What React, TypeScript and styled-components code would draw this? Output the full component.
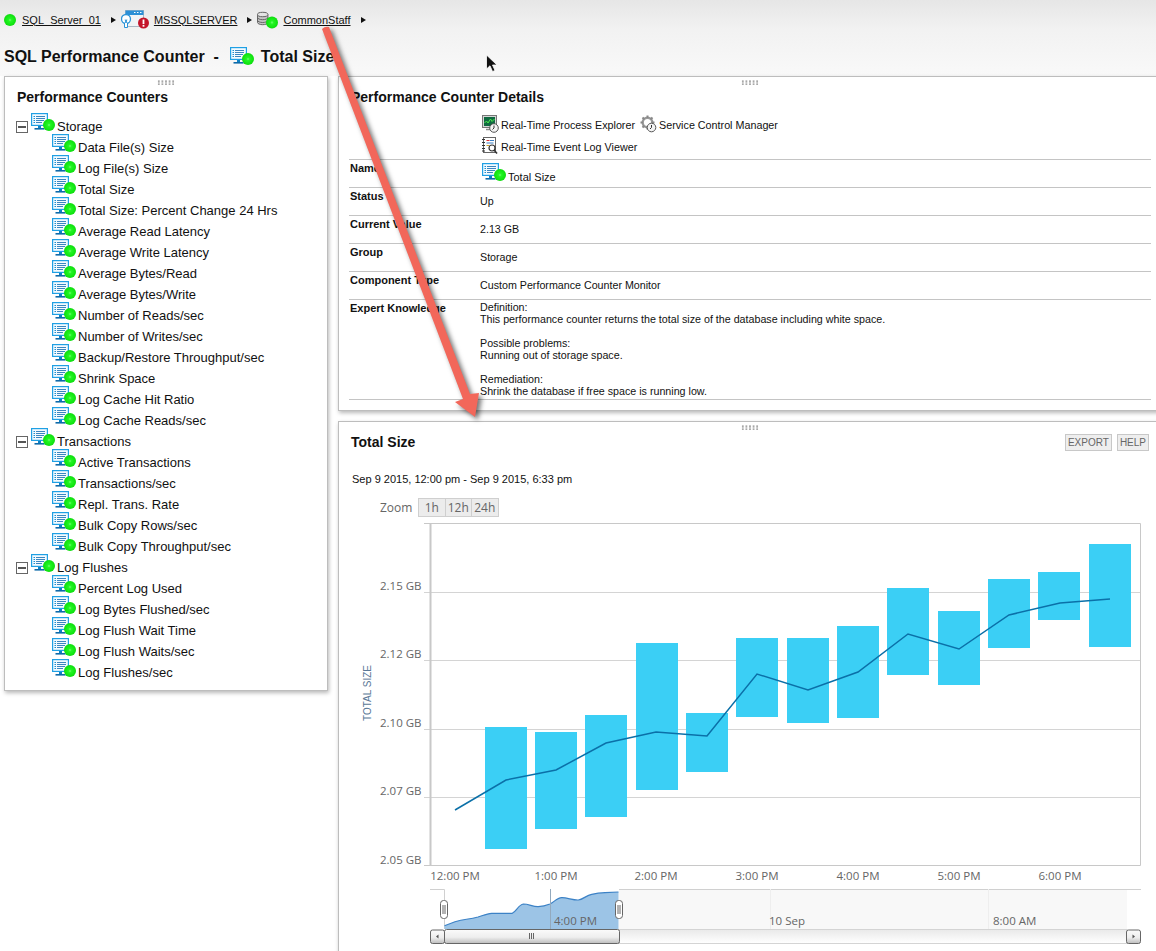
import React from "react";
import styled, { createGlobalStyle } from "styled-components";

const Global = createGlobalStyle`
  html, body { margin: 0; padding: 0; background: #fff; overflow: hidden; }
  body { font-family: "Liberation Sans", Arial, sans-serif; color: #111; }
`;

const Page = styled.div`
  position: relative;
  width: 1156px;
  height: 951px;
  overflow: hidden;
  background: #fff;
`;

const Header = styled.header`
  height: 76px;
  box-sizing: border-box;
  padding: 12px 0 0 4px;
  background: linear-gradient(#e6e6e6, #f2f2f2 40%, #f9f9f9);
`;

const Breadcrumb = styled.nav`
  display: flex;
  align-items: center;
  height: 15px;
  font-size: 11px;
`;

const CrumbLink = styled.a`
  color: #111;
  text-decoration: underline;
  margin-left: ${(p: { $gap: number }) => p.$gap}px;
`;

const CrumbArrow = styled.span`
  width: 0;
  height: 0;
  border-left: 5px solid #111;
  border-top: 3.5px solid transparent;
  border-bottom: 3.5px solid transparent;
  margin-left: 10px;
  margin-right: ${(p: { $gap: number }) => p.$gap}px;
`;

const PageTitle = styled.h1`
  display: flex;
  align-items: center;
  margin: 20px 0 0;
  height: 20px;
  font-size: 16px;
  font-weight: bold;
  white-space: pre;
`;

const TitleIcon = styled.span`
  display: inline-flex;
  margin: -3px 7px 0 11px;
`;

const Main = styled.main`
  display: grid;
  grid-template-columns: 324px 824px;
  column-gap: 10px;
  padding-left: 4px;
  align-items: start;
`;

const Panel = styled.section`
  position: relative;
  box-sizing: border-box;
  background: #fff;
  border: 1px solid #bdbdbd;
  box-shadow: 1px 2px 4px rgba(0, 0, 0, 0.28);
`;

const Grip = styled.div`
  position: absolute;
  top: 3px;
  left: 50%;
  margin-left: -9px;
  width: 18px;
  height: 5px;
  background: radial-gradient(circle, #a8a8a8 1px, transparent 1.3px) 0 0 / 3.6px 3px;
`;

const PanelTitle = styled.h2`
  margin: 0;
  font-size: 14px;
  line-height: 16px;
  font-weight: bold;
`;

const LeftPanel = styled(Panel)`
  padding: 12px 12px 7px;
`;

const Tree = styled.div`
  margin-top: 11px;
  margin-left: -1px;
`;

const TreeRow = styled.div`
  display: flex;
  align-items: center;
  height: 21px;
  font-size: 13px;
  white-space: nowrap;
  padding-left: ${(p: { $child?: boolean }) => (p.$child ? "36px" : "0")};
`;

const Expander = styled.span`
  box-sizing: border-box;
  width: 12px;
  height: 12px;
  margin-right: 3px;
  border: 1px solid #666;
  background: #fff;
  display: flex;
  align-items: center;
  justify-content: center;
  &::after {
    content: "";
    width: 8px;
    height: 2px;
    background: #555;
  }
`;

const RowIcon = styled.span`
  display: inline-flex;
  margin: -10px 2px 0 0;
`;

const RightColumn = styled.div`
  display: flex;
  flex-direction: column;
  gap: 10px;
`;

const DetailsPanel = styled(Panel)`
  height: 335px;
  padding: 12px 4px 0 12px;
`;

const ActionsRow = styled.div`
  margin: 5px 0 0 -2px;
  padding: 4px 0 0 133px;
  height: 50px;
  box-sizing: border-box;
  border-bottom: 1px solid #c4c4c4;
  width: 802px;
`;

const ActionLine = styled.div`
  display: flex;
  align-items: center;
  height: 22px;
  font-size: 10.75px;
  white-space: nowrap;
`;

const ActionIcon = styled.span`
  display: inline-flex;
  margin: -2px 2px 0 ${(p: { $gap?: number }) => p.$gap ?? 0}px;
`;

const DetailRow = styled.div`
  display: grid;
  grid-template-columns: 131px 1fr;
  box-sizing: border-box;
  width: 802px;
  margin-left: -2px;
  height: ${(p: { $h: number }) => p.$h}px;
  border-bottom: 1px solid #c4c4c4;
  font-size: 11px;
`;

const DetailLabel = styled.div`
  font-weight: bold;
  padding: 2px 0 0 1px;
  line-height: 12px;
`;

const DetailValue = styled.div`
  padding-top: ${(p: { $top?: number }) => p.$top ?? 7}px;
  line-height: 12px;
  font-size: 10.7px;
  white-space: pre-line;
`;

const NameValue = styled.div`
  display: flex;
  align-items: flex-start;
  padding: 3px 0 0 2px;
  line-height: 12px;
`;

const NameText = styled.span`
  margin: 8px 0 0 2px;
`;

const ChartPanel = styled(Panel)`
  height: 560px;
  padding: 12px 0 0 12px;
  border-bottom: none;
`;

const ChartHeader = styled.div`
  display: flex;
  align-items: flex-start;
  height: 17px;
  width: 798px;
`;

const HeaderSpacer = styled.div`
  flex: 1;
`;

const SmallButton = styled.button`
  box-sizing: border-box;
  height: 17px;
  padding: 0 2px;
  margin-left: 5px;
  font: 10px "Liberation Sans", Arial, sans-serif;
  color: #666;
  background: #eee;
  border: 1px solid #c8c8c8;
`;

const DateRange = styled.div`
  margin-top: 21px;
  padding-left: 1px;
  font-size: 11px;
  line-height: 14px;
`;

const ZoomRow = styled.div`
  display: flex;
  align-items: center;
  height: 19px;
  margin: 12px 0 0 29px;
  color: #666;
  font: 12px "Open Sans", sans-serif;
`;

const ZoomLabel = styled.span`
  width: 38px;
`;

const ZoomButton = styled.button`
  box-sizing: border-box;
  width: 27.5px;
  height: 19px;
  padding: 0;
  margin-right: -1px;
  font: 12px "Open Sans", sans-serif;
  color: #666;
  background: #ececec;
  border: 1px solid #cfcfcf;
`;

const ChartSvg = styled.svg`
  display: block;
  margin: 5px 0 0 -12px;
  text {
    font-family: "Open Sans", sans-serif;
    font-size: 11.5px;
    fill: #666;
  }
`;

const ArrowOverlay = styled.svg`
  position: absolute;
  left: 0;
  top: 0;
  pointer-events: none;
  filter: drop-shadow(3px 3px 2.5px rgba(0, 0, 0, 0.55));
`;

const CursorOverlay = styled.svg`
  position: absolute;
  left: 484px;
  top: 53px;
  pointer-events: none;
`;

const Sprite = styled.svg`
  position: absolute;
  width: 0;
  height: 0;
`;

const Defs = () => (
  <Sprite aria-hidden="true">
    <defs>
      <radialGradient id="greenDot" cx="50%" cy="50%" r="55%">
        <stop offset="0" stopColor="#70ff70" />
        <stop offset="0.25" stopColor="#22f522" />
        <stop offset="0.85" stopColor="#0ee00e" />
        <stop offset="1" stopColor="#0ab80a" />
      </radialGradient>
      <linearGradient id="thumb" x1="0" y1="0" x2="0" y2="1">
        <stop offset="0" stopColor="#fbfbfb" />
        <stop offset="0.55" stopColor="#eeeeee" />
        <stop offset="1" stopColor="#bdbdbd" />
      </linearGradient>
      <linearGradient id="track" x1="0" y1="0" x2="0" y2="1">
        <stop offset="0" stopColor="#e9e9e9" />
        <stop offset="1" stopColor="#ffffff" />
      </linearGradient>
    </defs>
  </Sprite>
);

const Monitor = () => (
  <svg width="24" height="18" viewBox="0 0 24 18">
    <rect x="0.6" y="0.6" width="15.8" height="11.8" fill="#f4fbff" stroke="#1fa0e4" strokeWidth="1.2" />
    <path d="M2.5 3.5h1.500M2.500 5.500h1.500M2.500 7.500h1.500M2.500 9.500h1.500" stroke="#1c8fd0" />
    <path d="M5 3.500h9M5 5.500h9M5 7.500h8M5 9.500h6" stroke="#3c86c0" />
    <rect x="7" y="13" width="3" height="2" fill="#0e82c4" />
    <rect x="3.500" y="15" width="10" height="1.600" fill="#0e6aaa" />
    <circle cx="18" cy="12" r="6" fill="url(#greenDot)" />
  </svg>
);

const Dot = () => (
  <svg width="12" height="12" viewBox="0 0 12 12">
    <circle cx="6" cy="6" r="6" fill="url(#greenDot)" />
  </svg>
);

const AppIcon = () => (
  <svg width="28" height="20" viewBox="0 0 28 20">
    <rect x="4.500" y="0.500" width="18" height="16" fill="#f0f3f6" stroke="#a9b7c4" />
    <rect x="4.500" y="0.500" width="18" height="4.500" fill="#2b8fd6" />
    <path d="M13 2.500h1.500M16 2.500h1.500M19 2.500h1.500" stroke="#fff" />
    <circle cx="5" cy="9" r="4.500" fill="#fff" stroke="#2a93d8" strokeWidth="1.300" />
    <path d="M3.500 13v4.500h3v-4.500M4.200 9.500l.8 3.500 .8-3.500" fill="#fff" stroke="#2a93d8" />
    <circle cx="22.500" cy="13" r="5.500" fill="#c4142a" />
    <rect x="21.600" y="9.500" width="1.800" height="4.600" fill="#fff" />
    <rect x="21.600" y="15" width="1.800" height="1.700" fill="#fff" />
  </svg>
);

const DbIcon = () => (
  <svg width="22" height="18" viewBox="0 0 22 18">
    <path d="M.5 3.500v8c0 1.200 2.500 2.200 5.200 2.200s5.200-1 5.200-2.200v-8" fill="#c4c4c4" stroke="#666" />
    <ellipse cx="5.700" cy="3.500" rx="5.200" ry="2.200" fill="#e4e4e4" stroke="#666" />
    <path d="M.5 6.500c0 1.200 2.500 2.200 5.200 2.200s5.200-1 5.200-2.200M.5 9.300c0 1.200 2.500 2.200 5.200 2.200s5.200-1 5.200-2.200" fill="none" stroke="#666" />
    <circle cx="15" cy="11.500" r="6" fill="url(#greenDot)" />
  </svg>
);

const ClockBadge = ({ x, y }: { x: number; y: number }) => (
  <g>
    <circle cx={x} cy={y} r="4.300" fill="#f4f4f4" stroke="#555" />
    <path d={`M${x} ${y - 2.500}V${y}l-1.500 1.500`} fill="none" stroke="#333" />
  </g>
);

const ProcessIcon = () => (
  <svg width="17" height="18" viewBox="0 0 17 18">
    <rect x="0.500" y="0.500" width="14" height="12" fill="#d6d6d6" stroke="#777" />
    <rect x="2" y="2" width="11" height="9" fill="#0f6a40" />
    <path d="M2.500 8l2-2 1.500 2 2.500-4 1.500 2.500 2.500-2.500" fill="none" stroke="#4de84d" />
    <path d="M4 14.500h7" stroke="#8a8a8a" strokeWidth="1.500" />
    <ClockBadge x={12} y={13} />
  </svg>
);

const GearIcon = () => (
  <svg width="17" height="18" viewBox="0 0 17 18">
    <circle cx="7.500" cy="7.500" r="4.800" fill="none" stroke="#9a9a9a" strokeWidth="2.400" />
    <path
      d="M7.500 0.500v2.500M7.500 12v2.500M0.500 7.500h2.500M12 7.500h2.500M2.500 2.500l1.800 1.800M10.700 10.700l1.800 1.800M12.500 2.500l-1.800 1.800M4.300 10.700l-1.800 1.800"
      stroke="#888"
      strokeWidth="2"
    />
    <ClockBadge x={11.500} y={12.500} />
  </svg>
);

const LogIcon = () => (
  <svg width="17" height="18" viewBox="0 0 17 18">
    <rect x="1.500" y="0.500" width="12" height="15" fill="#fff" stroke="#666" />
    <path d="M0 2.500h3M0 5.500h3M0 8.500h3M0 11.500h3M0 14h3" stroke="#333" />
    <path d="M4.500 3.500h3" stroke="#d33" />
    <path d="M8 3.500h4M4.500 6h7" stroke="#3a7fc4" />
    <path d="M4.500 8.500h3" stroke="#c9a227" />
    <circle cx="10" cy="11" r="3" fill="#fff" stroke="#333" strokeWidth="1.200" />
    <path d="M12 13l3 3.500" stroke="#333" strokeWidth="1.600" />
  </svg>
);

const groups: { name: string; items: string[] }[] = [
  {
    name: "Storage",
    items: [
      "Data File(s) Size",
      "Log File(s) Size",
      "Total Size",
      "Total Size: Percent Change 24 Hrs",
      "Average Read Latency",
      "Average Write Latency",
      "Average Bytes/Read",
      "Average Bytes/Write",
      "Number of Reads/sec",
      "Number of Writes/sec",
      "Backup/Restore Throughput/sec",
      "Shrink Space",
      "Log Cache Hit Ratio",
      "Log Cache Reads/sec",
    ],
  },
  {
    name: "Transactions",
    items: [
      "Active Transactions",
      "Transactions/sec",
      "Repl. Trans. Rate",
      "Bulk Copy Rows/sec",
      "Bulk Copy Throughput/sec",
    ],
  },
  {
    name: "Log Flushes",
    items: [
      "Percent Log Used",
      "Log Bytes Flushed/sec",
      "Log Flush Wait Time",
      "Log Flush Waits/sec",
      "Log Flushes/sec",
    ],
  },
];

const bars = [
  [485, 727, 849],
  [535, 732, 829],
  [585, 715, 817],
  [636, 643, 790],
  [686, 713, 772],
  [736, 638, 717],
  [787, 638, 723],
  [837, 626, 718],
  [887, 588, 675],
  [938, 611, 685],
  [988, 579, 648],
  [1038, 572, 620],
  [1089, 544, 647],
];

const linePoints =
  "455,810 506,780 556,770 606,743 656,732 707,736 757,674 808,690 858,672 908,634 959,649 1009,615 1060,603 1110,599";

const yLabels: [string, number][] = [
  ["2.15 GB", 590],
  ["2.12 GB", 658],
  ["2.10 GB", 727],
  ["2.07 GB", 795],
  ["2.05 GB", 864],
];

const xLabels: [string, number][] = [
  ["12:00 PM", 455],
  ["1:00 PM", 556],
  ["2:00 PM", 656],
  ["3:00 PM", 757],
  ["4:00 PM", 858],
  ["5:00 PM", 959],
  ["6:00 PM", 1060],
];

const areaTop =
  "L455 921.700 C460 920 464 919.500 468 919 C472 918.500 475 917.800 478 917 C483 915.500 487 913.800 491.700 913.300 L512.300 913.300 C516 911.500 519 904.500 523.300 904 C529 904 533 907 538.300 906.700 C543 906.400 546 905.500 550 904 C554 902 557 898 561.700 897.700 C567 897.500 573 900.300 578.300 900 C583 899.500 586 895.500 591.700 894.300 C596 893.500 600 893 605 892.700 L618.500 892";

const Handle = ({ x }: { x: number }) => (
  <g>
    <rect x={x - 3.500} y="900.500" width="7" height="18" rx="3" fill="#fff" stroke="#666" />
    <path d={`M${x - 1} 905v9M${x + 1} 905v9`} stroke="#666" />
  </g>
);

const Chart = () => (
  <ChartSvg width="818" height="429" viewBox="339 522 818 429">
    <rect x="430" y="523" width="710.500" height="342.500" fill="#fff" stroke="none" />
    {[592.500, 660.500, 729.500, 797.500].map((y) => (
      <path key={y} d={`M424 ${y}H1140`} stroke="#d4d4d4" />
    ))}
    <path d="M424 523.500H1140.500V865.500H424" fill="none" stroke="#c8c8c8" />
    <path d="M430.500 523V866" stroke="#c8c8c8" strokeWidth="2" />
    {bars.map(([x, y1, y2]) => (
      <rect key={x} x={x} y={y1} width="42" height={y2 - y1} fill="#3bcff5" />
    ))}
    <polyline points={linePoints} fill="none" stroke="#0b70a8" strokeWidth="1.500" />
    {yLabels.map(([t, y]) => (
      <text key={t} x="380" y={y}>
        {t}
      </text>
    ))}
    {xLabels.map(([t, x]) => (
      <text key={t} x={x} y="880" textAnchor="middle">
        {t}
      </text>
    ))}
    <text
      x="371"
      y="693"
      textAnchor="middle"
      transform="rotate(-90 371 693)"
      style={{ fontFamily: "Liberation Sans, sans-serif", fontSize: "10px", fill: "#5a7896" }}
    >
      TOTAL SIZE
    </text>

    <rect x="619" y="889" width="508" height="40" fill="#f8f8f8" />
    <path d="M430 889.500H444.500V929M619 889.500H1141" fill="none" stroke="#d0d0d0" />
    <path d="M770.500 889V929M988.500 889V929" stroke="#eeeeee" />
    <path d={`M444.500 929 V925.700 ${areaTop} V929 Z`} fill="#9cc4e6" />
    <path d={`M444.500 925.700 ${areaTop}`} fill="none" stroke="#3c82c6" strokeWidth="1.200" />
    <path d="M550.500 889V929" stroke="#93a9bd" />
    <text x="554" y="925">4:00 PM</text>
    <text x="769" y="925">10 Sep</text>
    <text x="993" y="925">8:00 AM</text>
    <Handle x={444} />
    <Handle x={619} />

    <rect x="619" y="929.500" width="508" height="14" fill="url(#track)" stroke="#d4d4d4" />
    <rect x="430.500" y="930" width="14" height="13.500" rx="2" fill="url(#thumb)" stroke="#666" />
    <path d="M438.500 934.500v4l-2.500-2z" fill="#555" />
    <rect x="444.500" y="929.500" width="175" height="14" rx="2" fill="url(#thumb)" stroke="#666" />
    <path d="M529.500 933v6M531.500 933v6M533.500 933v6" stroke="#666" />
    <rect x="1126.500" y="930" width="14" height="13.500" rx="2" fill="url(#thumb)" stroke="#666" />
    <path d="M1132.500 934.500v4l2.500-2z" fill="#555" />
  </ChartSvg>
);

export default function App() {
  return (
    <>
      <Global />
      <Page>
        <Defs />
        <Header>
          <Breadcrumb>
            <Dot />
            <CrumbLink href="#" $gap={6}>SQL_Server_01</CrumbLink>
            <CrumbArrow $gap={5} />
            <AppIcon />
            <CrumbLink href="#" $gap={5}>MSSQLSERVER</CrumbLink>
            <CrumbArrow $gap={5} />
            <DbIcon />
            <CrumbLink href="#" $gap={4}>CommonStaff</CrumbLink>
            <CrumbArrow $gap={0} />
          </Breadcrumb>
          <PageTitle>
            SQL Performance Counter  -
            <TitleIcon>
              <Monitor />
            </TitleIcon>
            Total Size
          </PageTitle>
        </Header>
        <Main>
          <LeftPanel>
            <Grip />
            <PanelTitle>Performance Counters</PanelTitle>
            <Tree>
              {groups.map((g) => (
                <React.Fragment key={g.name}>
                  <TreeRow>
                    <Expander />
                    <RowIcon>
                      <Monitor />
                    </RowIcon>
                    {g.name}
                  </TreeRow>
                  {g.items.map((item) => (
                    <TreeRow key={item} $child>
                      <RowIcon>
                        <Monitor />
                      </RowIcon>
                      {item}
                    </TreeRow>
                  ))}
                </React.Fragment>
              ))}
            </Tree>
          </LeftPanel>
          <RightColumn>
            <DetailsPanel>
              <Grip />
              <PanelTitle>Performance Counter Details</PanelTitle>
              <ActionsRow>
                <ActionLine>
                  <ActionIcon><ProcessIcon /></ActionIcon>
                  Real-Time Process Explorer
                  <ActionIcon $gap={5}><GearIcon /></ActionIcon>
                  Service Control Manager
                </ActionLine>
                <ActionLine>
                  <ActionIcon><LogIcon /></ActionIcon>
                  Real-Time Event Log Viewer
                </ActionLine>
              </ActionsRow>
              <DetailRow $h={28}>
                <DetailLabel>Name</DetailLabel>
                <NameValue>
                  <Monitor />
                  <NameText>Total Size</NameText>
                </NameValue>
              </DetailRow>
              <DetailRow $h={28}>
                <DetailLabel>Status</DetailLabel>
                <DetailValue>Up</DetailValue>
              </DetailRow>
              <DetailRow $h={28}>
                <DetailLabel>Current Value</DetailLabel>
                <DetailValue>2.13 GB</DetailValue>
              </DetailRow>
              <DetailRow $h={28}>
                <DetailLabel>Group</DetailLabel>
                <DetailValue>Storage</DetailValue>
              </DetailRow>
              <DetailRow $h={28}>
                <DetailLabel>Component Type</DetailLabel>
                <DetailValue>Custom Performance Counter Monitor</DetailValue>
              </DetailRow>
              <DetailRow $h={100}>
                <DetailLabel>Expert Knowledge</DetailLabel>
                <DetailValue $top={1}>
                  {"Definition:\nThis performance counter returns the total size of the database including white space.\n\nPossible problems:\nRunning out of storage space.\n\nRemediation:\nShrink the database if free space is running low."}
                </DetailValue>
              </DetailRow>
            </DetailsPanel>
            <ChartPanel>
              <Grip />
              <ChartHeader>
                <PanelTitle>Total Size</PanelTitle>
                <HeaderSpacer />
                <SmallButton>EXPORT</SmallButton>
                <SmallButton>HELP</SmallButton>
              </ChartHeader>
              <DateRange>Sep 9 2015, 12:00 pm - Sep 9 2015, 6:33 pm</DateRange>
              <ZoomRow>
                <ZoomLabel>Zoom</ZoomLabel>
                <ZoomButton>1h</ZoomButton>
                <ZoomButton>12h</ZoomButton>
                <ZoomButton>24h</ZoomButton>
              </ZoomRow>
              <Chart />
            </ChartPanel>
          </RightColumn>
        </Main>
        <ArrowOverlay width="1156" height="951" viewBox="0 0 1156 951">
          <path d="M322 29 Q325 26 329 27 L470 394 L479 393 L475 417 L455 402 L463 399 Z" fill="#f2675a" />
        </ArrowOverlay>
        <CursorOverlay width="16" height="20" viewBox="0 0 16 20">
          <path d="M2.500 2 V16 L6 12.800 L8.500 18.500 L11 17.500 L8.500 12 L13 12 Z" fill="#111" stroke="#fff" strokeWidth="0.800" />
        </CursorOverlay>
      </Page>
    </>
  );
}
